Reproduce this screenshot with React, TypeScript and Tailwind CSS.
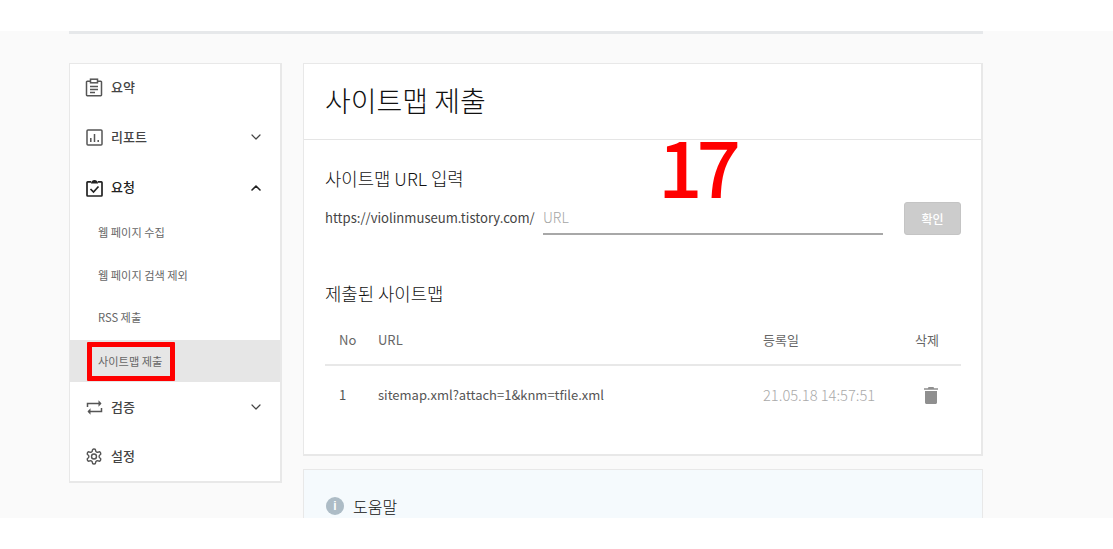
import React from 'react';
import { ChevronDown, ChevronUp } from 'lucide-react';

const SummaryIcon = () => (
  <svg width="18" height="19" viewBox="0 0 18 19" fill="none" stroke="#555" strokeWidth="1.5">
    <path d="M5.5 3.3H2.2a.7.7 0 0 0-.7.7v13c0 .4.3.7.7.7h13.600c.4 0 .7-.3.7-.7V4a.7.7 0 0 0-.7-.7h-3.300" />
    <rect x="5.500" y="1.200" width="7" height="3.600" />
    <path d="M5 8.500h8M5 11.500h8M5 14.500h5" />
  </svg>
);

const ReportIcon = () => (
  <svg width="17" height="17" viewBox="0 0 17 17" fill="none" stroke="#555" strokeWidth="1.5">
    <rect x="1" y="1" width="15" height="15" rx="1" />
    <path d="M4.800 9v4M8.500 5v8M12.200 11v2" />
  </svg>
);

const RequestIcon = () => (
  <svg width="17" height="18" viewBox="0 0 17 18" fill="none" stroke="#222" strokeWidth="1.700">
    <path d="M5 2.800H1.700a.7.7 0 0 0-.7.7v12.800c0 .4.3.7.7.7h13.600c.4 0 .7-.3.7-.7V3.500a.7.7 0 0 0-.7-.7H12" />
    <path d="M5 4.500c0-2 1.500-3.500 3.500-3.500S12 2.500 12 4.500z" fill="#222" stroke="none" />
    <path d="M4.500 10l3 3 5-5.500" />
  </svg>
);

const VerifyIcon = () => (
  <svg width="17" height="17" viewBox="0 0 17 17" fill="none" stroke="#555" strokeWidth="1.500">
    <path d="M1.500 8V4.500h13" />
    <path d="M12.500 1.200l3 3.300-3 3.300" fill="#555" stroke="none" />
    <path d="M15.500 9v3.500h-13" />
    <path d="M4.500 9.200l-3 3.300 3 3.300" fill="#555" stroke="none" />
  </svg>
);

const GearIcon = () => (
  <svg width="19" height="19" viewBox="0 0 24 24" fill="none" stroke="#555" strokeWidth="1.900" strokeLinejoin="round">
    <path d="M12.220 2h-.44a2 2 0 0 0-2 2v.18a2 2 0 0 1-1 1.730l-.43.250a2 2 0 0 1-2 0l-.15-.080a2 2 0 0 0-2.730.730l-.22.380a2 2 0 0 0 .730 2.730l.15.100a2 2 0 0 1 1 1.720v.510a2 2 0 0 1-1 1.740l-.15.090a2 2 0 0 0-.730 2.730l.22.380a2 2 0 0 0 2.730.730l.15-.080a2 2 0 0 1 2 0l.43.250a2 2 0 0 1 1 1.730V20a2 2 0 0 0 2 2h.44a2 2 0 0 0 2-2v-.18a2 2 0 0 1 1-1.730l.43-.250a2 2 0 0 1 2 0l.15.080a2 2 0 0 0 2.730-.730l.22-.390a2 2 0 0 0-.730-2.730l-.15-.080a2 2 0 0 1-1-1.740v-.500a2 2 0 0 1 1-1.740l.15-.090a2 2 0 0 0 .730-2.730l-.22-.380a2 2 0 0 0-2.730-.730l-.15.080a2 2 0 0 1-2 0l-.43-.250a2 2 0 0 1-1-1.730V4a2 2 0 0 0-2-2z" />
    <circle cx="12" cy="12" r="3.300" />
  </svg>
);

const TrashIcon = () => (
  <svg width="14" height="17" viewBox="0 0 14 17" fill="#8f8f8f">
    <path d="M4.500 0h5l.6 1.200H14v1.600H0V1.200h3.900z" />
    <path d="M1 4h12v11.500c0 .8-.7 1.500-1.500 1.500h-9C1.700 17 1 16.300 1 15.500z" />
  </svg>
);

const TopItem = ({ icon, label, chevron, active, className }: { icon: React.ReactNode; label: string; chevron?: 'up' | 'down'; active?: boolean; className: string }) => (
  <div className={`flex items-center pl-[15px] pr-[16px] ${className}`}>
    <span className="flex w-[18px] justify-center">{icon}</span>
    <span className={`ml-[8px] flex-1 pb-[1px] text-[13px] font-medium ${active ? 'text-[#222]' : 'text-[#444]'}`}>{label}</span>
    {chevron === 'down' && <ChevronDown size={16} strokeWidth={1.800} className="text-[#444]" />}
    {chevron === 'up' && <ChevronUp size={16} strokeWidth={2.400} className="text-[#222]" />}
  </div>
);

const SubItem = ({ label, active, className }: { label: string; active?: boolean; className: string }) => (
  <div className={`flex items-center pl-[28px] text-[11.2px] text-[#666] ${active ? 'relative bg-[#e6e6e6]' : ''} ${className}`}>
    {label}
    {active && <div className="absolute left-[17px] top-[2px] h-[39px] w-[88px] rounded-[1px] border-[5px] border-[#ff0000]" />}
  </div>
);

export default function App() {
  return (
    <div className="h-[549px] w-[1113px] overflow-hidden bg-white font-['Noto_Sans_CJK_KR',sans-serif]">
      <div className="mt-[31px] h-[487px] overflow-hidden bg-[#fafafa] pl-[69px]">
        <div className="h-[3px] w-[914px] bg-[#e6e8ea]" />
        <div className="mt-[29px] flex items-start gap-[21px]">
          <aside className="h-[420px] w-[213px] border-2 border-t border-l border-[#e8e8e8] bg-white">
            <TopItem className="h-[48px] pb-[2px]" icon={<SummaryIcon />} label="요약" />
            <TopItem className="h-[50px]" icon={<ReportIcon />} label="리포트" chevron="down" />
            <TopItem className="h-[49px] pt-[2px]" icon={<RequestIcon />} label="요청" chevron="up" active />
            <SubItem className="h-[43px]" label="웹 페이지 수집" />
            <SubItem className="h-[42px]" label="웹 페이지 검색 제외" />
            <SubItem className="h-[44px] pb-[2px]" label="RSS 제출" />
            <SubItem className="h-[42px]" label="사이트맵 제출" active />
            <TopItem className="h-[50px]" icon={<VerifyIcon />} label="검증" chevron="down" />
            <TopItem className="h-[49px]" icon={<GearIcon />} label="설정" />
          </aside>

          <main className="w-[680px]">
            <section className="relative h-[393px] border-2 border-t border-l border-[#e8e8e8] bg-white">
              <div className="flex h-[76px] items-center border-b border-[#e5e5e5] pb-[4px] pl-[21px] text-[28px] font-light leading-none text-[#111]">
                사이트맵 제출
              </div>
              <div className="absolute left-[354px] top-[56px] text-[78px] font-medium leading-[88px] tracking-[-6px] text-[#ff0000]">17</div>

              <div className="pl-[21px] pr-[20px]">
                <h2 className="mt-[25px] text-[17.8px] font-light leading-[26px] text-[#111]">사이트맵 URL 입력</h2>
                <div className="mt-[11px] flex items-end">
                  <span className="mb-[7px] w-[210px] whitespace-nowrap text-[13.1px] leading-[20px] text-[#444]">https://violinmuseum.tistory.com/</span>
                  <div className="ml-[8px] flex h-[33px] w-[340px] items-center border-b-2 border-[#a8a8a8] text-[14px] font-light text-[#a5a5a5]">URL</div>
                  <div className="ml-[21px] flex h-[33px] w-[57px] items-center justify-center rounded-[3px] border border-[#c4c4c4] bg-[#cccccc] text-[12px] font-medium text-white">확인</div>
                </div>

                <h2 className="mt-[45px] text-[17.8px] font-light leading-[26px] text-[#111]">제출된 사이트맵</h2>
                <div className="mt-[13px] flex h-[47px] items-center border-b-2 border-[#e8e8e8] pb-[4px] text-[13px] text-[#666]">
                  <span className="w-[53px] pl-[14px]">No</span>
                  <span className="w-[385px]">URL</span>
                  <span className="w-[152px]">등록일</span>
                  <span>삭제</span>
                </div>
                <div className="flex h-[58px] items-center text-[13px] text-[#555]">
                  <span className="w-[53px] pl-[14px]">1</span>
                  <span className="w-[385px]">sitemap.xml?attach=1&amp;knm=tfile.xml</span>
                  <span className="w-[161px] text-[14.700px] font-light text-[#aaaaaa]">21.05.18 14:57:51</span>
                  <TrashIcon />
                </div>
              </div>
            </section>

            <section className="mt-[13px] h-[80px] border border-[#e8e8e8] bg-[#f5fafd] pl-[22px] pt-[24px]">
              <div className="flex items-center">
                <span className="flex h-[18px] w-[18px] items-center justify-center rounded-full bg-[#adbcc6] font-['Liberation_Sans',sans-serif] text-[12px] font-bold text-white">i</span>
                <span className="ml-[9px] text-[16px] font-light leading-[24px] text-[#111]">도움말</span>
              </div>
            </section>
          </main>
        </div>
      </div>
    </div>
  );
}
